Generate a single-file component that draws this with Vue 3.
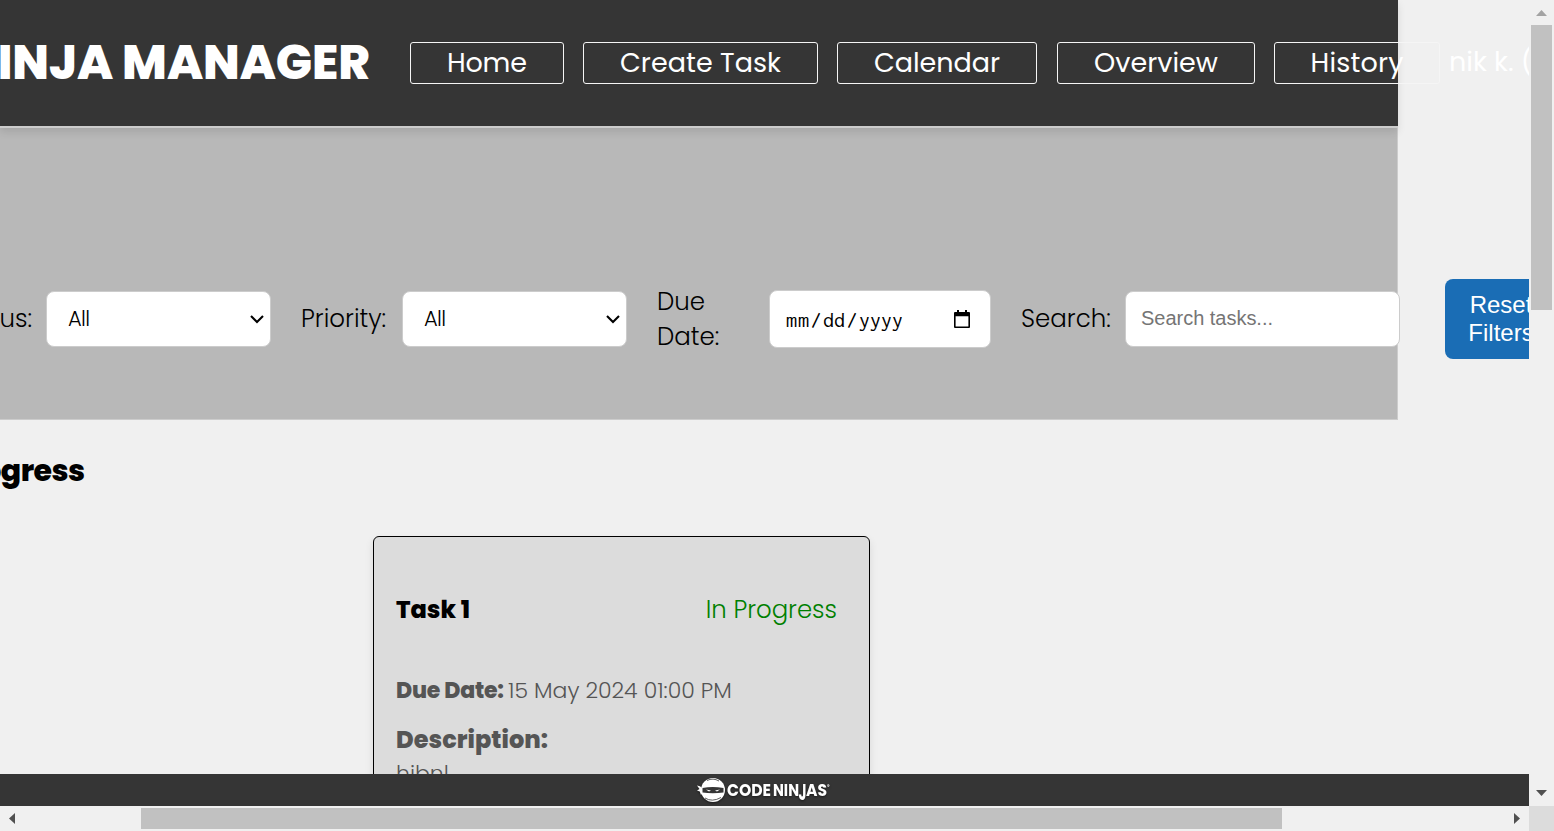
<script setup>
const navItems = [
  { label: 'Home', box: 154, text: 80 },
  { label: 'Create Task', box: 235, text: 161 },
  { label: 'Calendar', box: 200, text: 126 },
  { label: 'Overview', box: 198, text: 124 },
  { label: 'History', box: 166, text: 93 },
]

// Spaces the letters of an element so that its text takes the given width.
const vFit = {
  mounted(el, { value }) {
    const natural = el.getBoundingClientRect().width
    const gap = (value - natural) / (el.textContent.length - 1)
    el.style.letterSpacing = `${gap}px`
    el.style.marginRight = `${-gap}px`
  },
}
</script>

<template>
  <div class="window">
    <div class="view">
      <header class="header">
        <h1 class="brand"><span v-fit="409" class="fit">NINJA MANAGER</span></h1>
        <nav class="nav">
          <a v-for="item in navItems" :key="item.label" class="nav-link" :style="{ width: item.box + 'px' }">
            <span v-fit="item.text" class="fit">{{ item.label }}</span>
          </a>
        </nav>
        <span class="user"><span v-fit="84" class="fit">nik k. (</span></span>
      </header>

      <section class="filters">
        <label class="label status"><span class="fit">Status:</span></label>
        <div class="control select">
          <span v-fit="22" class="fit">All</span>
          <svg width="16" height="12" viewBox="0 0 16 12"><path d="M2 3l6 6 6-6" fill="none" stroke="#000" stroke-width="2.1" /></svg>
        </div>
        <label class="label priority"><span class="fit">Priority:</span></label>
        <div class="control select">
          <span v-fit="22" class="fit">All</span>
          <svg width="16" height="12" viewBox="0 0 16 12"><path d="M2 3l6 6 6-6" fill="none" stroke="#000" stroke-width="2.1" /></svg>
        </div>
        <label class="label due"><span class="fit">Due</span><br /><span class="fit">Date:</span></label>
        <div class="control date">
          <span class="date-parts"><span v-fit="23" class="fit">mm</span><i>/</i><span v-fit="22" class="fit">dd</span><i>/</i><span v-fit="44" class="fit">yyyy</span></span>
          <svg width="16" height="18" viewBox="0 0 16 18"><path d="M3 0h2v2h6V0h2v2h2q1 0 1 1v14q0 1-1 1H1q-1 0-1-1V3q0-1 1-1h2zM1.6 6.2v10.2h12.8V6.2z" fill="#000" fill-rule="evenodd" /></svg>
        </div>
        <label class="label search-label"><span class="fit">Search:</span></label>
        <div class="control search"><span v-fit="132" class="fit">Search tasks...</span></div>
        <button class="reset">Reset<br />Filters</button>
      </section>

      <main class="tasks">
        <h2 class="heading"><span v-fit="168" class="fit">In Progress</span></h2>
        <article class="card">
          <div class="card-top">
            <h3 class="task-name"><span v-fit="74" class="fit">Task 1</span></h3>
            <span class="state"><span class="fit">In Progress</span></span>
          </div>
          <p class="line when"><b v-fit="108" class="fit">Due Date:</b><span class="fit">15 May 2024 01:00 PM</span></p>
          <h4 class="desc-title"><span v-fit="152" class="fit">Description:</span></h4>
          <p class="line desc"><span class="fit">hibnl</span></p>
        </article>
      </main>

      <footer class="footer">
        <svg class="logo" width="136" height="30" viewBox="0 0 136 30">
          <g fill="#fff">
            <circle cx="17" cy="15" r="12" />
            <path d="M1 10.500l3 .8 2.500 2.200v4.500l-1.500 2-1.200-3.500L1 15.500l2.500-1.600z" />
          </g>
          <path d="M6.500 13q10-2 21 0v4.500q-11 1.500-21 0z" fill="#353535" />
          <path d="M10 14.500l5 1-2 1zM24 14.500l-5 1 2 1z" fill="#fff" />
          <path d="M11 5.500q6-3 12 .5M9 23q7 4.500 16-.5" fill="none" stroke="#353535" stroke-width=".8" />
          <g class="logo-text">
            <text x="31" y="21" textLength="44" lengthAdjust="spacingAndGlyphs">CODE</text>
            <text x="77" y="21" textLength="26" lengthAdjust="spacingAndGlyphs">NIN</text>
            <text x="102.500" y="25" class="logo-j" textLength="8" lengthAdjust="spacingAndGlyphs">J</text>
            <text x="110" y="21" textLength="21" lengthAdjust="spacingAndGlyphs">AS</text>
            <text x="131" y="13" class="logo-mark">®</text>
          </g>
        </svg>
      </footer>
    </div>

    <div class="bar vertical">
      <svg width="25" height="25"><path d="M12.500 10l5.500 6H7z" fill="#a3a3a3" /></svg>
      <div class="thumb"></div>
      <svg class="end" width="25" height="25"><path d="M12.500 15l5.500-6H7z" fill="#505050" /></svg>
    </div>
    <div class="bar horizontal">
      <svg width="25" height="25"><path d="M9 12.500l6-5.500v11z" fill="#505050" /></svg>
      <div class="thumb"></div>
      <svg class="end" width="25" height="25"><path d="M16 12.500L10 7v11z" fill="#505050" /></svg>
    </div>
    <div class="corner"></div>
  </div>
</template>

<style>
html,
body {
  margin: 0;
  overflow: hidden;
}
</style>

<style scoped>
.window {
  display: grid;
  grid-template: 806px 25px / 1529px 25px;
  width: 1554px;
  height: 831px;
  overflow: hidden;
  background: #f0f0f0;
  font-family: Poppins, Inter, "Liberation Sans", sans-serif;
  color: #000;
}
.window * {
  box-sizing: border-box;
}
h1, h2, h3, h4, p {
  margin: 0;
}
svg {
  display: block;
  flex: none;
}
.fit {
  display: inline-block;
  white-space: pre;
}
.view {
  display: flex;
  flex-direction: column;
  min-width: 0;
  overflow: hidden;
}
.header {
  display: flex;
  flex: none;
  align-items: center;
  width: 1398px;
  height: 128px;
  padding-bottom: 1px;
  background: #353535;
  border-bottom: 2px solid #ccc;
  box-shadow: 0 4px 8px rgba(0, 0, 0, 0.1);
  color: #fff;
  position: relative;
}
.brand {
  display: flex;
  flex: none;
  justify-content: flex-end;
  width: 370px;
  margin-right: 40px;
  font-size: 48px;
  font-weight: 800;
  line-height: 60px;
  padding-top: 1px;
}
.nav {
  display: flex;
  flex: none;
  gap: 19px;
}
.nav-link {
  display: flex;
  flex: none;
  justify-content: center;
  height: 42px;
  border: 1px solid #f5f5f5;
  border-radius: 3px;
  font-size: 27px;
  line-height: 39px;
}
.nav-link:nth-child(4) {
  margin-left: 1px;
}
.user {
  flex: none;
  margin-left: 9px;
  padding-bottom: 2px;
  font-size: 27px;
  line-height: 40px;
}
.filters {
  display: flex;
  flex: none;
  align-items: center;
  width: 1398px;
  height: 292px;
  padding-top: 91px;
  background: #b8b8b8;
  border: solid #ccc;
  border-width: 0 1px 1px 0;
}
.label {
  flex: none;
  font-size: 24.500px;
  font-weight: 300;
  line-height: 35px;
  padding-bottom: 1px;
}
.status {
  display: flex;
  justify-content: flex-end;
  width: 32px;
  margin-right: 14px;
}
.priority {
  width: 87px;
  margin: 0 14px 0 30px;
}
.due {
  width: 82px;
  margin: 0 30px;
  padding: 0;
}
.search-label {
  width: 90px;
  margin: 0 14px 0 30px;
}
.control {
  display: flex;
  flex: none;
  align-items: center;
  justify-content: space-between;
  width: 225px;
  height: 56px;
  background: #fff;
  border: 1px solid #ccc;
  border-radius: 8px;
  font-size: 21px;
}
.select {
  padding: 0 5px 0 21px;
  font-weight: 300;
}
.select .fit {
  padding-bottom: 1px;
}
.date {
  width: 222px;
  height: 58px;
  padding: 0 20px 0 16px;
}
.date-parts {
  display: flex;
  font: 22px Consolas, Inconsolata, "Noto Sans Mono", "Liberation Mono", monospace;
}
.date-parts i {
  width: 14px;
  font-style: normal;
  text-align: center;
}
.search {
  width: 275px;
  padding: 0 15px 2px;
  color: #757575;
  font: 20px "Liberation Sans", Arial, sans-serif;
}
.reset {
  flex: none;
  width: 112px;
  height: 80px;
  margin-left: 45px;
  padding: 0;
  background: #1a6db5;
  border: 0;
  border-radius: 8px;
  color: #fff;
  font: 24px/28px "Liberation Sans", Arial, sans-serif;
}
.tasks {
  flex: 1;
  min-height: 0;
  padding-top: 29px;
  overflow: hidden;
}
.heading {
  display: flex;
  justify-content: flex-end;
  width: 85px;
  height: 44px;
  margin-bottom: 43px;
  font-size: 30px;
  font-weight: 800;
  line-height: 44px;
}
.card {
  width: 497px;
  height: 420px;
  margin-left: 373px;
  padding: 55px 32px 0 22px;
  background: #dcdcdc;
  border: 1px solid #000;
  border-radius: 6px;
  box-shadow: 0 4px 8px rgba(0, 0, 0, 0.1);
  color: #555;
}
.card-top {
  display: flex;
  justify-content: space-between;
  margin-bottom: 47px;
  font-size: 24px;
  line-height: 36px;
}
.task-name {
  color: #000;
  font-size: 24px;
  font-weight: 800;
}
.state {
  color: green;
  font-size: 24.400px;
  font-weight: 300;
}
.line {
  display: flex;
  font-size: 22px;
  font-weight: 300;
}
.when {
  gap: 4px;
  height: 32px;
  margin-bottom: 15px;
  line-height: 32px;
}
.when b {
  font-weight: 800;
}
.desc-title {
  font-size: 24px;
  font-weight: 800;
  line-height: 36px;
}
.desc {
  padding-top: 1px;
  line-height: 30px;
}
.footer {
  display: flex;
  flex: none;
  align-items: center;
  height: 32px;
  padding-left: 696px;
  background: #353535;
  position: relative;
}
.logo {
  filter: drop-shadow(0 1px 1px rgba(0, 0, 0, 0.5));
}
.logo-text {
  fill: #fff;
  font: 700 17px Poppins, Lato, sans-serif;
}
.logo-j {
  font-size: 22px;
}
.logo-mark {
  font-size: 5px;
}
.bar {
  display: flex;
  background: #f0f0f0;
}
.bar .end {
  margin-left: auto;
}
.vertical {
  flex-direction: column;
}
.vertical .thumb {
  width: 21px;
  height: 285px;
  margin-left: 2px;
  background: #c1c1c1;
}
.vertical .end {
  margin: auto 0 0;
}
.horizontal .thumb {
  width: 1141px;
  height: 21px;
  margin: 2px 0 0 116px;
  background: #c1c1c1;
}
.corner {
  background: #dcdcdc;
}
</style>
